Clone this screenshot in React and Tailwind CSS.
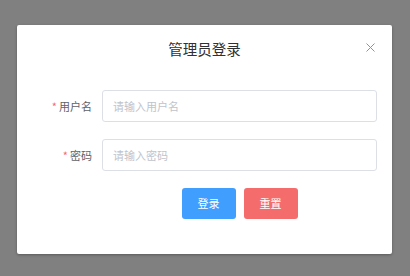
import React from 'react';

const fields = [
  { label: '用户名', placeholder: '请输入用户名', type: 'text' },
  { label: '密码', placeholder: '请输入密码', type: 'password' },
];

const App = () => {
  return (
    <div
      className="w-[410px] h-[276px] bg-[#808080] pt-[25px] overflow-hidden"
      style={{ fontFamily: '"Noto Sans CJK SC", "Liberation Sans", sans-serif' }}
    >
      <div className="relative ml-[17px] w-[375px] h-[229px] bg-white rounded-[2px] shadow-[0_1px_3px_rgba(0,0,0,0.3)] pt-[12px] pr-[15px]">
        {/* Header */}
        <div className="pl-[15px] h-[24px] leading-[24px] text-center text-[14.5px] text-[#303133]">
          管理员登录
        </div>
        <button className="absolute top-[17px] right-[17px] w-[10px] h-[10px] flex items-center justify-center">
          <svg width="9" height="9" viewBox="0 0 9 9" fill="none" stroke="#909399" strokeWidth="1">
            <path d="M0.5 0.5 L8.5 8.5 M8.5 0.5 L0.5 8.5" />
          </svg>
        </button>

        {/* Form */}
        <div className="mt-[29px] flex flex-col gap-[17px]">
          {fields.map((f) => (
            <div key={f.label} className="flex items-center">
              <label className="w-[85px] pr-[10px] text-right text-[11px] text-[#606266]">
                <span className="text-[#F56C6C] mr-[2px]">*</span>
                {f.label}
              </label>
              <input
                type={f.type}
                placeholder={f.placeholder}
                className="flex-1 h-[32px] border border-[#DCDFE6] rounded-[3px] px-[10px] text-[11px] text-[#606266] placeholder:text-[#C0C4CC] outline-none"
              />
            </div>
          ))}
          <div className="flex">
            <div className="w-[85px]" />
            <div className="flex-1 flex justify-center gap-[8px]">
              <button className="w-[54px] h-[31px] rounded-[3px] bg-[#409EFF] text-white text-[11px]">
                登录
              </button>
              <button className="w-[54px] h-[31px] rounded-[3px] bg-[#F56C6C] text-white text-[11px]">
                重置
              </button>
            </div>
          </div>
        </div>
      </div>
    </div>
  );
};

export default App;
